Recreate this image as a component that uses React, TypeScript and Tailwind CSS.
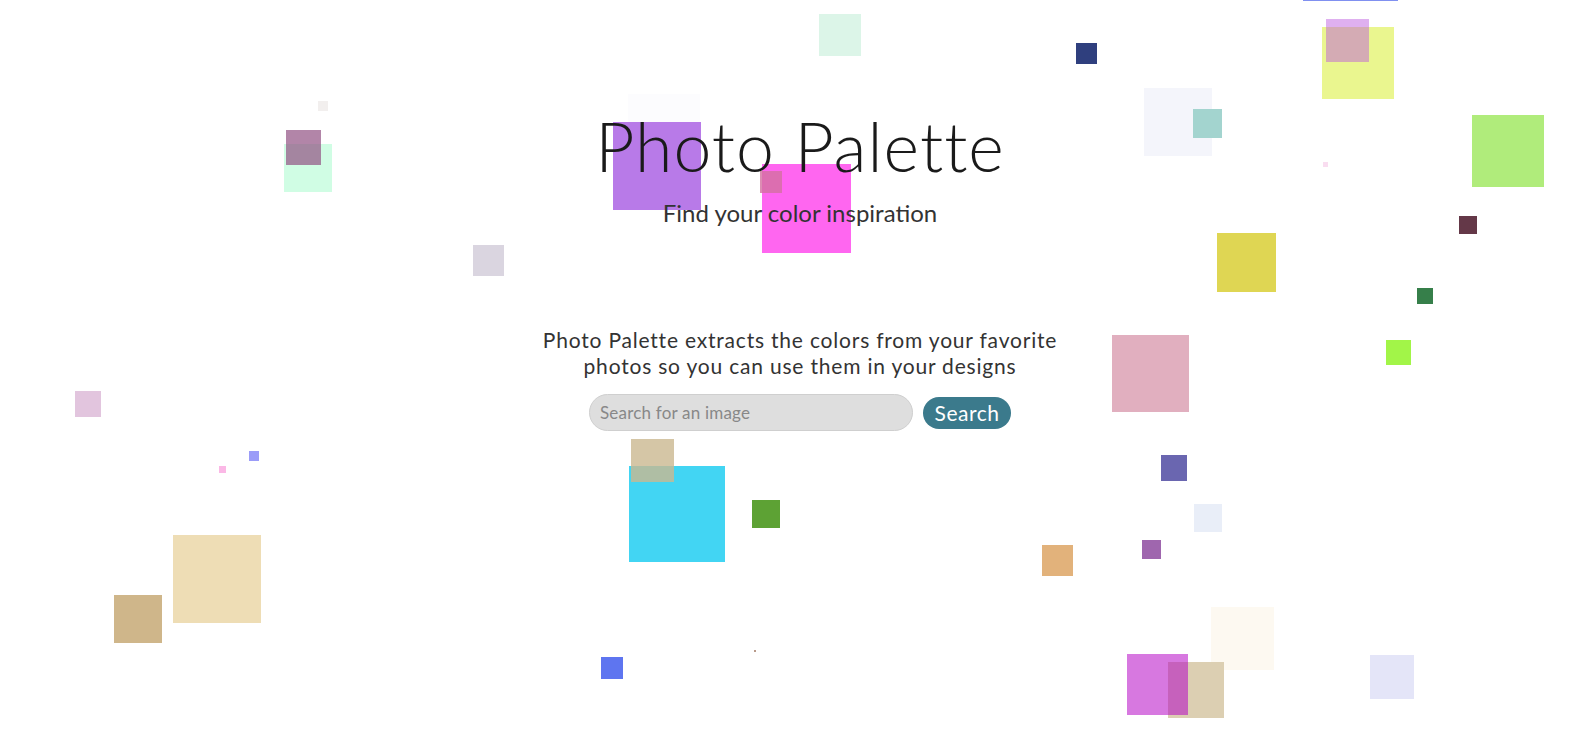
const squares = [
  { x: 1303, y: -94, s: 95, c: "#8090f0" },
  { x: 628, y: 94, s: 72, c: "#fcfcfe" },
  { x: 613, y: 122, s: 88, c: "#b87ae8" },
  { x: 762, y: 164, s: 89, c: "#ff66f0" },
  { x: 760, y: 171, s: 22, c: "#d370a0", o: 0.8 },
  { x: 819, y: 14, s: 42, c: "#dcf5e8" },
  { x: 1076, y: 43, s: 21, c: "#2f3f7e" },
  { x: 1144, y: 88, s: 68, c: "#f4f5fb" },
  { x: 1193, y: 109, s: 29, c: "#a3d4cf" },
  { x: 1322, y: 27, s: 72, c: "#eaf68f" },
  { x: 1326, y: 19, s: 43, c: "#bb57df", o: 0.47 },
  { x: 1323, y: 162, s: 5, c: "#f9ddf0" },
  { x: 1472, y: 115, s: 72, c: "#b0ec7b" },
  { x: 1459, y: 216, s: 18, c: "#643848" },
  { x: 1217, y: 233, s: 59, c: "#dfd653" },
  { x: 1417, y: 288, s: 16, c: "#367f4a" },
  { x: 318, y: 101, s: 10, c: "#f2efee" },
  { x: 284, y: 144, s: 48, c: "#d0fde4" },
  { x: 286, y: 130, s: 35, c: "#915183", o: 0.7 },
  { x: 473, y: 245, s: 31, c: "#dad5e0" },
  { x: 75, y: 391, s: 26, c: "#e2c5de" },
  { x: 249, y: 451, s: 10, c: "#9b9cf8" },
  { x: 219, y: 466, s: 7, c: "#fbb8e6" },
  { x: 114, y: 595, s: 48, c: "#cfb68a" },
  { x: 173, y: 535, s: 88, c: "#eeddb5" },
  { x: 629, y: 466, s: 96, c: "#42d5f3" },
  { x: 631, y: 439, s: 43, c: "#cab890", o: 0.8 },
  { x: 752, y: 500, s: 28, c: "#5da234" },
  { x: 601, y: 657, s: 22, c: "#5e75f0" },
  { x: 754, y: 650, s: 2, c: "#b89a8a" },
  { x: 1112, y: 335, s: 77, c: "#e1afbf" },
  { x: 1386, y: 340, s: 25, c: "#a2f548" },
  { x: 1161, y: 455, s: 26, c: "#6a66b0" },
  { x: 1194, y: 504, s: 28, c: "#e9eef8" },
  { x: 1042, y: 545, s: 31, c: "#e2b27b" },
  { x: 1142, y: 540, s: 19, c: "#9f66ae" },
  { x: 1211, y: 607, s: 63, c: "#fdf9f1" },
  { x: 1168, y: 662, s: 56, c: "#dccfb2" },
  { x: 1127, y: 654, s: 61, c: "#b300c4", o: 0.53 },
  { x: 1370, y: 655, s: 44, c: "#e4e5f8" },
];

export default function App() {
  return (
    <div className="relative h-screen w-full overflow-hidden bg-white font-['Lato',sans-serif]">
      {squares.map((sq, i) => (
        <div
          key={i}
          className="absolute"
          style={{
            left: sq.x,
            top: sq.y,
            width: sq.s,
            height: sq.s,
            backgroundColor: sq.c,
            opacity: sq.o ?? 1,
          }}
        />
      ))}

      <main className="relative z-10 flex flex-col items-center pl-[17px] pt-[112px] text-center">
        <h1 className="text-[68px] leading-none font-light tracking-[1px] text-[#1a1a1a]">
          Photo Palette
        </h1>
        <p className="mt-[21px] text-[24px] leading-none text-[#333]">
          Find your color inspiration
        </p>
        <p className="mt-[102px] text-[21px] leading-[26px] tracking-[0.8px] text-[#333]">
          Photo Palette extracts the colors from your favorite
          <br />
          photos so you can use them in your designs
        </p>
        <form
          className="mt-[15px] flex items-center gap-[10px]"
          onSubmit={(e) => e.preventDefault()}
        >
          <input
            type="text"
            placeholder="Search for an image"
            className="h-[37px] w-[324px] rounded-full border border-[#cfcfcf] bg-[#dedede] px-[10px] text-[17px] tracking-[0.2px] text-[#333] outline-none placeholder:text-[#888]"
          />
          <button
            type="submit"
            className="h-[32px] w-[88px] rounded-full bg-[#3b7a8c] text-[21px] tracking-[0.5px] text-white"
          >
            Search
          </button>
        </form>
      </main>
    </div>
  );
}
